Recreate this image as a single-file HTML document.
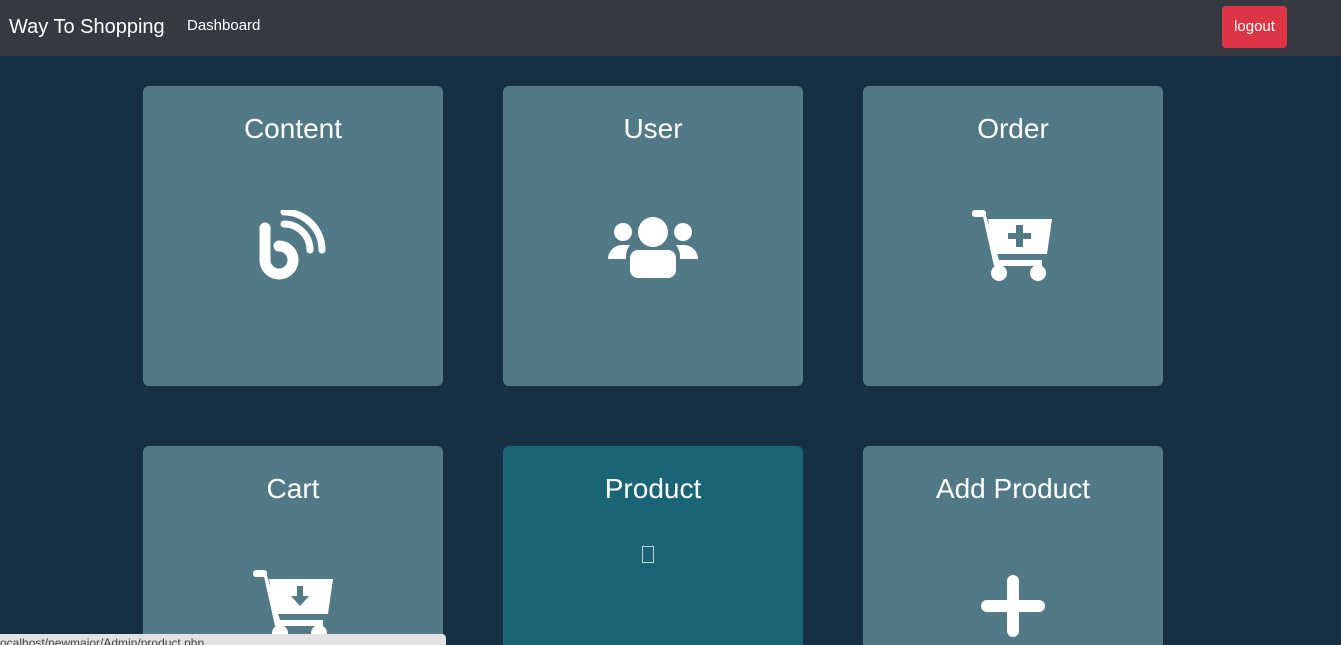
<!DOCTYPE html>
<html><head><style>
html,body{margin:0;width:1341px;height:645px;overflow:hidden}
#w{position:relative;width:1341px;height:645px;overflow:hidden;background:#172f42;font-family:"Liberation Sans",sans-serif}
.nav{position:absolute;left:0;top:0;width:1341px;height:56px;background:#353a42}
.brand{position:absolute;left:9px;top:16px;color:#fff;font-size:20px}
.dash{position:absolute;left:187px;top:17px;color:#fff;font-size:15px}
.btn{position:absolute;left:1222px;top:6px;width:65px;height:42px;background:#dc3545;border-radius:4px;color:#fff;font-size:15px;line-height:42px;text-align:center}
.card{position:absolute;width:300px;height:300px;background:#517a86;border-radius:6px;color:#fff;text-align:center;overflow:hidden}
.b{height:199px;border-radius:6px 6px 0 0}
.card h2{margin:0;position:absolute;top:27px;width:100%;font-weight:normal;font-size:28px}
.card svg{position:absolute}
.status{position:absolute;left:0;top:634px;width:446px;height:11px;background:#e2e2e2;border-radius:0 4px 0 0;font-size:12px;color:#444;line-height:18px;white-space:nowrap;overflow:hidden}
</style></head><body><div id="w">
<div class="nav"><div class="brand">Way To Shopping</div><div class="dash">Dashboard</div><div class="btn">logout</div></div>

<div class="card" style="left:143px;top:86px"><h2>Content</h2>
<svg style="left:114px;top:124px" width="72" height="72" viewBox="0 0 72 72" fill="none" stroke="#fff" stroke-linecap="round">
<path d="M8 18 V50 a14 14 0 1 0 14 -14" stroke-width="11"/>
<path d="M27 14 a26 26 0 0 1 26 26" stroke-width="7"/>
<path d="M27 2 a38 38 0 0 1 38 38" stroke-width="7"/>
</svg></div>

<div class="card" style="left:503px;top:86px"><h2>User</h2>
<svg style="left:105px;top:129px" width="90" height="63" viewBox="0 0 90 63" fill="#fff">
<circle cx="45" cy="17" r="15"/><circle cx="15" cy="17" r="9"/><circle cx="75" cy="17" r="9"/>
<rect x="22" y="35" width="46" height="28" rx="8"/><path d="M0 44a14 14 0 0 1 14-14h8a20 20 0 0 0-4 14z" /><path d="M90 44a14 14 0 0 0-14-14h-8a20 20 0 0 1 4 14z"/>
</svg></div>

<div class="card" style="left:863px;top:86px"><h2>Order</h2>
<svg style="left:109px;top:124px" width="82" height="72" viewBox="0 0 82 72" fill="#fff">
<rect x="0" y="0" width="14" height="7" rx="3"/><path d="M10 2 L22 56 H70 V50 H27 L13 2z"/>
<path d="M16 9 H80 L75 44 H22z"/><circle cx="27" cy="63" r="8"/><circle cx="66" cy="63" r="8"/>
<path d="M44 15h7v8h8v6h-8v8h-7v-8h-8v-6h8z" fill="#517a86"/>
</svg></div>

<div class="card b" style="left:143px;top:446px"><h2>Cart</h2>
<svg style="left:110px;top:124px" width="82" height="72" viewBox="0 0 82 72" fill="#fff">
<rect x="0" y="0" width="14" height="7" rx="3"/><path d="M10 2 L22 56 H70 V50 H27 L13 2z"/>
<path d="M16 9 H80 L75 44 H22z"/><circle cx="27" cy="63" r="8"/><circle cx="66" cy="63" r="8"/>
<path d="M44 16h6v10h6l-9 10l-9-10h6z" fill="#517a86"/>
</svg></div>

<div class="card b" style="left:503px;top:446px;background:#196475"><h2>Product</h2>
<div style="position:absolute;left:139px;top:100px;width:12px;height:17px;border:1px solid #dcd;box-sizing:border-box"></div></div>

<div class="card b" style="left:863px;top:446px"><h2>Add Product</h2>
<svg style="left:118px;top:129px" width="64" height="62" viewBox="0 0 64 62" fill="#fff">
<rect x="26" y="0" width="12" height="62" rx="6"/><rect x="0" y="25" width="64" height="12" rx="6"/>
</svg></div>

<div class="status">ocalhost/newmajor/Admin/product.php</div>
</div></body></html>
